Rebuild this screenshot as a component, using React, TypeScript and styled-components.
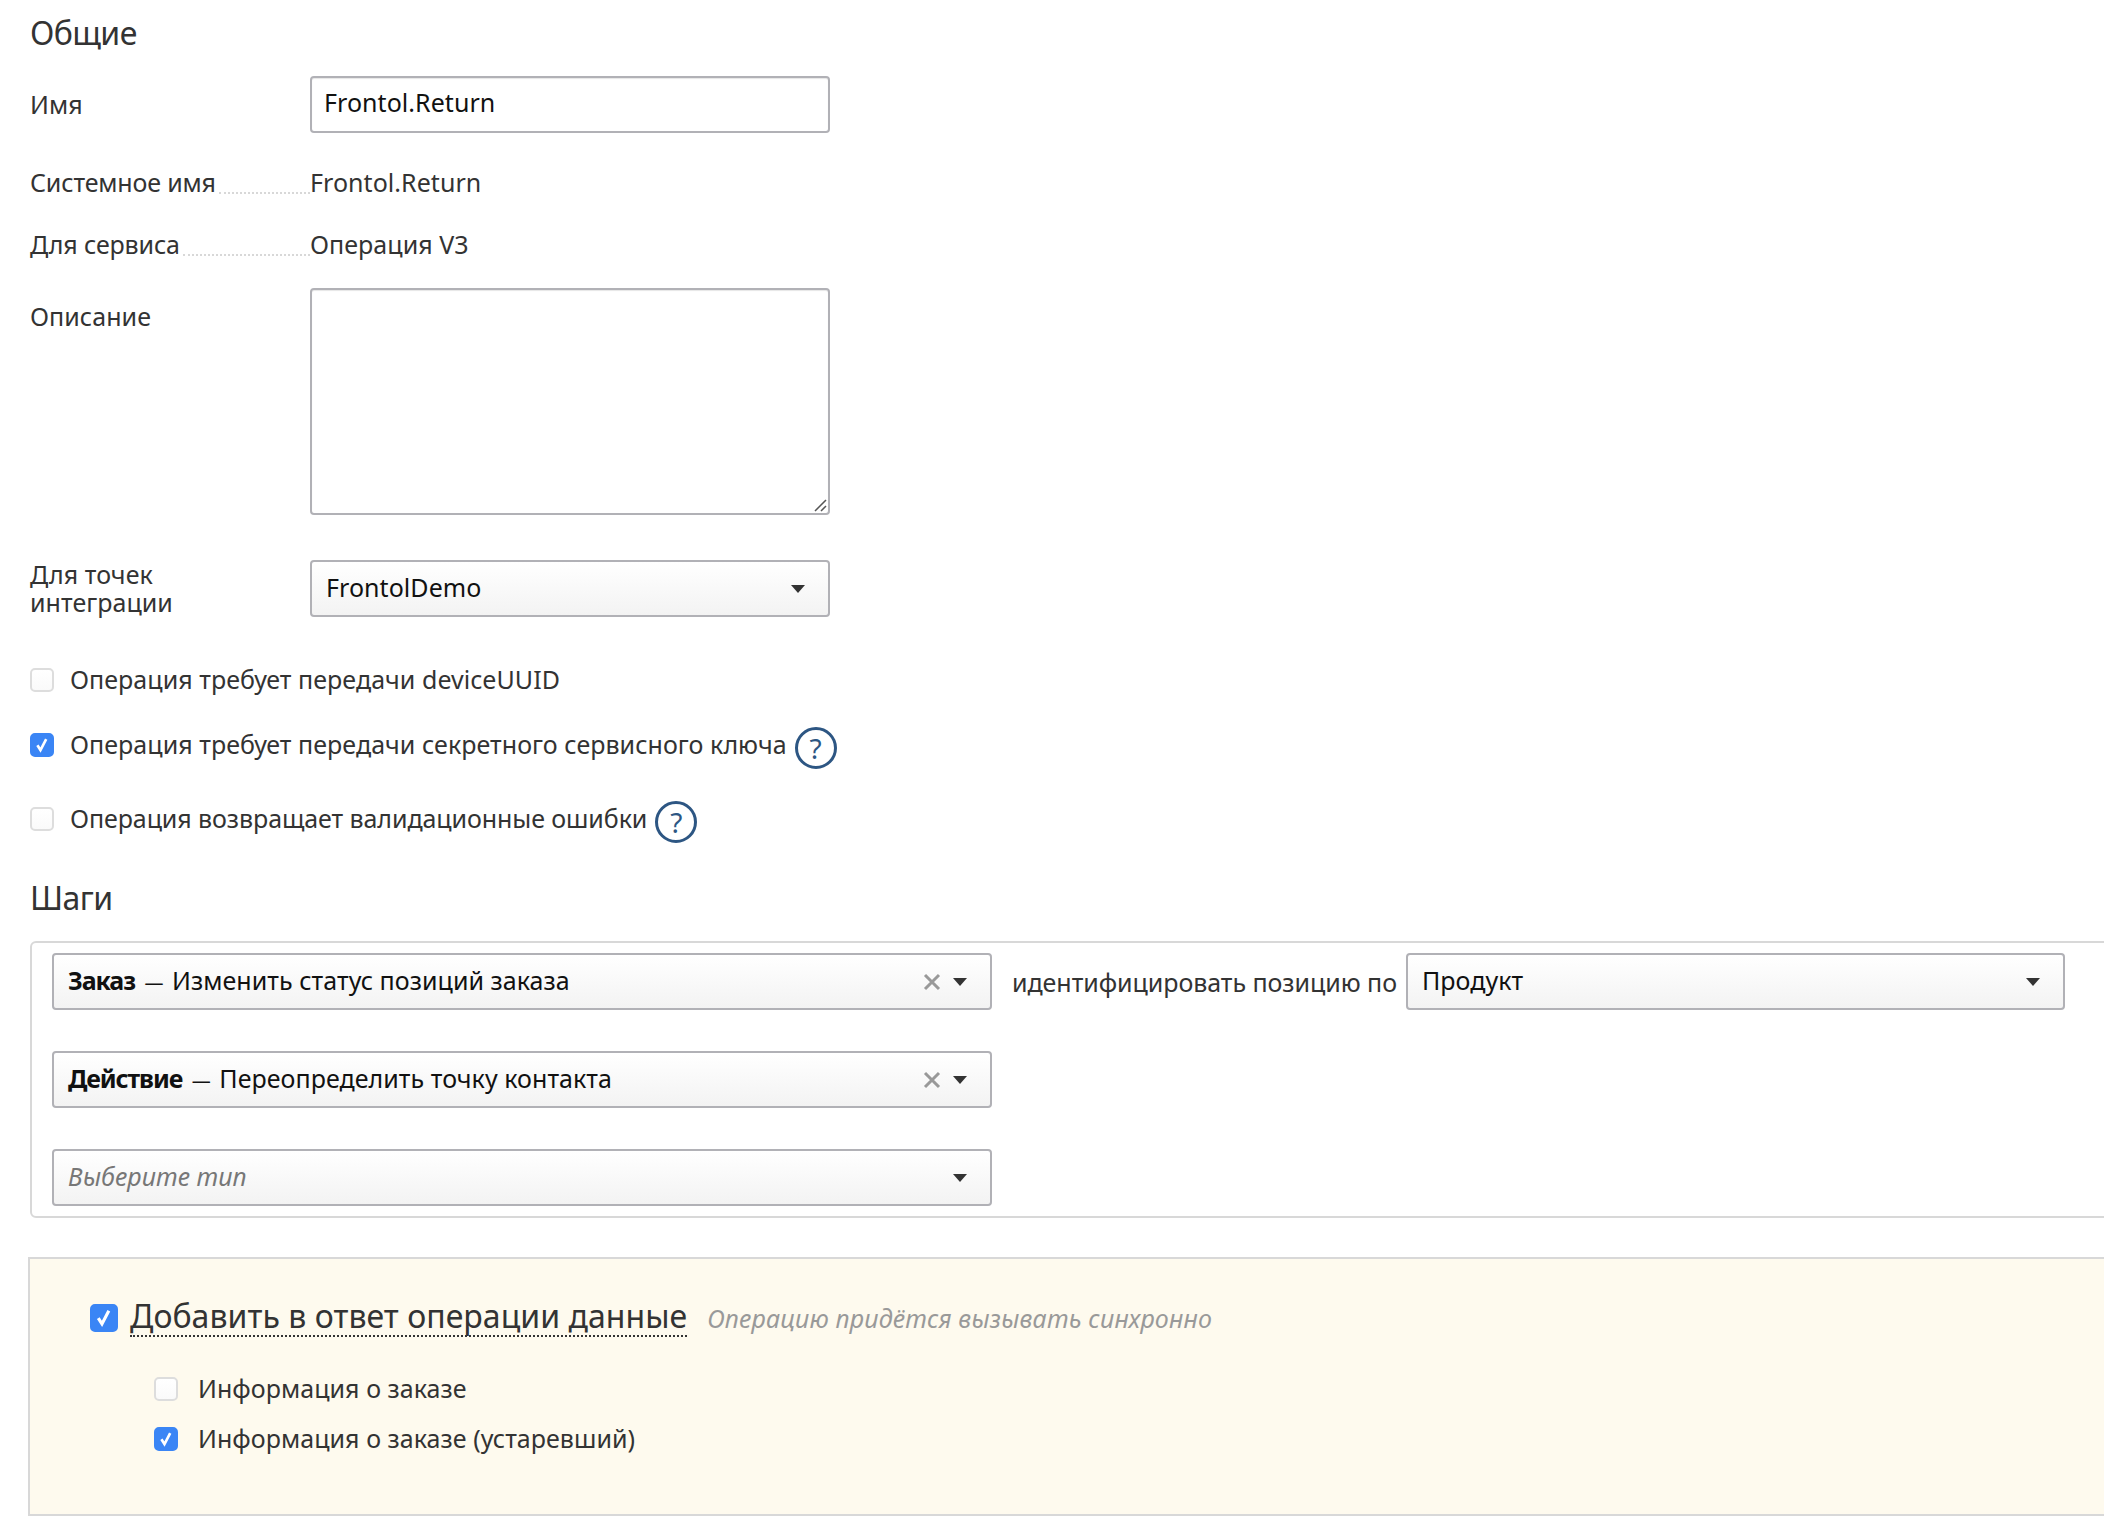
import React from "react";
import styled, {createGlobalStyle} from "styled-components";

const fontStack = `"Noto Sans", "Open Sans", "Liberation Sans", sans-serif`;

const GlobalStyle = createGlobalStyle`
	html, body {
		margin: 0;
		padding: 0;
		background: #fff;
		overflow: hidden;
	}

	body {
		font-family: ${fontStack};
		font-size: 25px;
		letter-spacing: 0.05px;
		color: #333;
	}
`;

const Page = styled.div`
	width: 2104px;
	height: 1538px;
	padding: 13px 0 0 30px;
	box-sizing: border-box;
	overflow: hidden;
`;

const SectionTitle = styled.h2<{$top?: number}>`
	margin: ${p => p.$top ?? 0}px 0 0;
	font-size: 32px;
	line-height: 40px;
	font-weight: 400;
	letter-spacing: -0.6px;
	color: #333;
`;

const FormRow = styled.div<{$top: number; $align?: string}>`
	display: grid;
	grid-template-columns: 280px 520px;
	align-items: ${p => p.$align ?? "center"};
	margin-top: ${p => p.$top}px;
`;

const Label = styled.div`
	line-height: 28px;
	margin: -1px 0 1px;
`;

const TopLabel = styled.div`
	line-height: 28px;
	padding-top: 14px;
`;

const LeaderLabel = styled.div`
	display: flex;
	line-height: 32px;
	letter-spacing: -0.15px;
`;

const Leader = styled.span`
	flex: 1;
	margin: 0 0 4px 3px;
	border-bottom: 2px dotted #d8d8d8;
`;

const Value = styled.div`
	line-height: 32px;
`;

const TextInput = styled.input`
	box-sizing: border-box;
	width: 100%;
	height: 57px;
	padding: 0 12px 5px;
	border: 2px solid #b1b1b6;
	border-radius: 4px;
	box-shadow: inset 0 1px 1px rgba(0, 0, 0, 0.1);
	font: inherit;
	letter-spacing: inherit;
	color: #111;
	outline: none;
`;

const TextAreaWrap = styled.div`
	position: relative;
	height: 227px;
`;

const TextArea = styled.textarea`
	display: block;
	box-sizing: border-box;
	width: 100%;
	height: 100%;
	resize: none;
	border: 2px solid #b1b1b6;
	border-radius: 4px;
	box-shadow: inset 0 1px 1px rgba(0, 0, 0, 0.1);
	outline: none;
`;

const ResizeGrip = styled.svg`
	position: absolute;
	right: 3px;
	bottom: 3px;
	width: 15px;
	height: 15px;
	stroke: #555;
	stroke-width: 1.5;
`;

const SelectBox = styled.div<{$width?: number}>`
	box-sizing: border-box;
	display: flex;
	align-items: center;
	width: ${p => (p.$width ? `${p.$width}px` : "100%")};
	height: 57px;
	padding: 0 23px 0 14px;
	flex: none;
	border: 2px solid #b1b1b6;
	border-radius: 4px;
	background: linear-gradient(#fff, #f3f3f3);
	color: #111;
`;

const SelectText = styled.span`
	flex: 1;
	padding-bottom: 3px;
	white-space: nowrap;
`;

const Placeholder = styled(SelectText)`
	font-style: italic;
	color: #777;
`;

const StepName = styled.b`
	margin-right: 3px;
	letter-spacing: -1.1px;
`;

const StepDash = styled.span`
	margin-right: 2px;
	font-size: 19px;
`;

const Caret = styled.span`
	width: 0;
	height: 0;
	border-left: 7px solid transparent;
	border-right: 7px solid transparent;
	border-top: 8px solid #333;
`;

const ClearIcon = styled.svg`
	width: 18px;
	height: 18px;
	margin-right: 12px;
	stroke: #999;
	stroke-width: 3;
`;

const CheckRow = styled.div<{$top: number; $gap?: number}>`
	display: flex;
	align-items: center;
	gap: ${p => p.$gap ?? 16}px;
	height: 42px;
	margin-top: ${p => p.$top}px;
`;

const CheckText = styled.span<{$tight?: boolean}>`
	padding-bottom: 2px;
	letter-spacing: ${p => (p.$tight ? "-0.08px" : "inherit")};
`;

const CheckBoxMark = styled.span<{$checked?: boolean; $size?: number}>`
	box-sizing: border-box;
	display: flex;
	align-items: center;
	justify-content: center;
	flex: none;
	width: ${p => p.$size ?? 24}px;
	height: ${p => p.$size ?? 24}px;
	border-radius: 5px;
	border: 2px solid ${p => (p.$checked ? "#3a85f5" : "#ddd")};
	background: ${p => (p.$checked ? "#3a85f5" : "linear-gradient(#fff, #fafafa)")};
`;

const CheckSvg = styled.svg`
	width: 88%;
	height: 88%;
	fill: none;
	stroke: #fff;
	stroke-width: 3;
`;

const HelpMark = styled.span`
	box-sizing: border-box;
	display: flex;
	align-items: center;
	justify-content: center;
	flex: none;
	width: 42px;
	height: 42px;
	margin: 6px 0 0 -8px;
	border: 3px solid #2d5683;
	border-radius: 50%;
	font-size: 28px;
	color: #2d5683;
`;

const StepsBox = styled.div`
	box-sizing: border-box;
	width: 2100px;
	margin-top: 23px;
	padding: 10px 0 10px 20px;
	border: 2px solid #d8d8d8;
	border-radius: 6px 0 0 6px;
	display: flex;
	flex-direction: column;
	gap: 41px;
`;

const StepRow = styled.div`
	display: flex;
	align-items: center;
`;

const StepHint = styled.span`
	margin: 0 9px 0 20px;
	letter-spacing: -0.05px;
	white-space: nowrap;
`;

const ResponseBox = styled.div`
	box-sizing: border-box;
	width: 2100px;
	height: 259px;
	margin: 39px 0 0 -2px;
	padding: 39px 0 0 60px;
	border: 2px solid #d8d8d8;
	border-right: 0;
	background: #fefaee;
`;

const ResponseHead = styled.div`
	display: flex;
	align-items: center;
	height: 40px;
`;

const ResponseTitle = styled.span`
	margin: 0 0 2px 12px;
	font-size: 32px;
	line-height: 38px;
	letter-spacing: 0.05px;
	border-bottom: 2px dotted #333;
`;

const ResponseNote = styled.span`
	margin-left: 20px;
	font-style: italic;
	letter-spacing: 0.15px;
	color: #999;
`;

const SubOptions = styled.div`
	display: flex;
	flex-direction: column;
	gap: 8px;
	margin: 30px 0 0 64px;
`;

function Check (props: {checked?: boolean; size?: number}) {
	return (
		<CheckBoxMark $checked={props.checked} $size={props.size}>
			{props.checked &&
				<CheckSvg viewBox="0 0 20 20">
					<path d="M5 10.5 L8.5 16 L15 3.5" />
				</CheckSvg>
			}
		</CheckBoxMark>
	);
}

function Select (props: {width?: number; clearable?: boolean; children: React.ReactNode}) {
	return (
		<SelectBox $width={props.width}>
			{props.children}
			{props.clearable &&
				<ClearIcon viewBox="0 0 18 18">
					<path d="M2 2 L16 16 M16 2 L2 16" />
				</ClearIcon>
			}
			<Caret />
		</SelectBox>
	);
}

export default function App () {
	return (
		<Page>
			<GlobalStyle />
			<SectionTitle>Общие</SectionTitle>
			<FormRow $top={23}>
				<Label>Имя</Label>
				<TextInput defaultValue="Frontol.Return" readOnly />
			</FormRow>
			<FormRow $top={33}>
				<LeaderLabel>Системное имя<Leader /></LeaderLabel>
				<Value>Frontol.Return</Value>
			</FormRow>
			<FormRow $top={30}>
				<LeaderLabel>Для сервиса<Leader /></LeaderLabel>
				<Value>Операция V3</Value>
			</FormRow>
			<FormRow $top={28} $align="start">
				<TopLabel>Описание</TopLabel>
				<TextAreaWrap>
					<TextArea />
					<ResizeGrip viewBox="0 0 15 15">
						<path d="M14 3 L3 14 M14 9 L9 14" />
					</ResizeGrip>
				</TextAreaWrap>
			</FormRow>
			<FormRow $top={45}>
				<Label>Для точек<br />интеграции</Label>
				<Select><SelectText>FrontolDemo</SelectText></Select>
			</FormRow>
			<CheckRow $top={42}>
				<Check />
				<CheckText>Операция требует передачи deviceUUID</CheckText>
			</CheckRow>
			<CheckRow $top={23}>
				<Check checked />
				<CheckText>Операция требует передачи секретного сервисного ключа</CheckText>
				<HelpMark>?</HelpMark>
			</CheckRow>
			<CheckRow $top={32}>
				<Check />
				<CheckText $tight>Операция возвращает валидационные ошибки</CheckText>
				<HelpMark>?</HelpMark>
			</CheckRow>
			<SectionTitle $top={38}>Шаги</SectionTitle>
			<StepsBox>
				<StepRow>
					<Select width={940} clearable>
						<SelectText><StepName>Заказ</StepName> <StepDash>—</StepDash> Изменить статус позиций заказа</SelectText>
					</Select>
					<StepHint>идентифицировать позицию по</StepHint>
					<Select width={659}><SelectText>Продукт</SelectText></Select>
				</StepRow>
				<StepRow>
					<Select width={940} clearable>
						<SelectText><StepName>Действие</StepName> <StepDash>—</StepDash> Переопределить точку контакта</SelectText>
					</Select>
				</StepRow>
				<StepRow>
					<Select width={940}><Placeholder>Выберите тип</Placeholder></Select>
				</StepRow>
			</StepsBox>
			<ResponseBox>
				<ResponseHead>
					<Check checked size={28} />
					<ResponseTitle>Добавить в ответ операции данные</ResponseTitle>
					<ResponseNote>Операцию придётся вызывать синхронно</ResponseNote>
				</ResponseHead>
				<SubOptions>
					<CheckRow $top={0} $gap={20}>
						<Check />
						<CheckText>Информация о заказе</CheckText>
					</CheckRow>
					<CheckRow $top={0} $gap={20}>
						<Check checked />
						<CheckText>Информация о заказе (устаревший)</CheckText>
					</CheckRow>
				</SubOptions>
			</ResponseBox>
		</Page>
	);
}
